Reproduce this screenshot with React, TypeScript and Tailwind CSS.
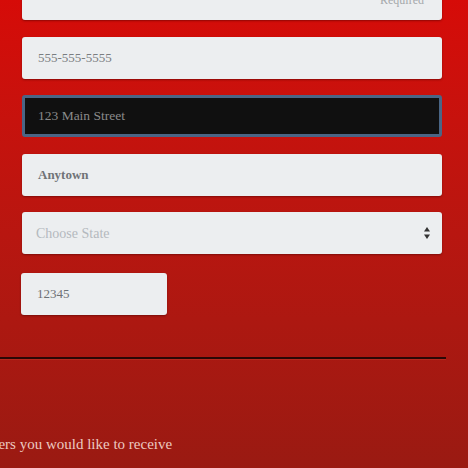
import { ReactNode } from "react";

const fieldClass =
  "flex h-[42px] items-center rounded-[3px] bg-[#eceef0] px-4 text-[13px] shadow-[0_1px_2px_rgba(60,0,0,0.45)]";

function Field({ children, className = "" }: { children: ReactNode; className?: string }) {
  return <div className={`${fieldClass} ${className}`}>{children}</div>;
}

export default function App() {
  return (
    <div
      className="h-[468px] w-[468px] overflow-hidden bg-gradient-to-b from-[#d60b08] via-[#b81610] to-[#9a1a12] text-[#555]"
      style={{ fontFamily: '"Liberation Serif", "DejaVu Serif", serif' }}
    >
      <div className="flex w-[442px] flex-col pl-[22px]">
        {/* campo cortado arriba: solo se ve la etiqueta "Required" */}
        <Field className="-mt-[22px] items-start justify-end pt-[13px]">
          <span className="pr-[2px] text-[12px] text-[#a5a8ab]">Required</span>
        </Field>

        <Field className="mt-[17px] text-[13.5px] text-[#7a7d80]">555-555-5555</Field>

        <div className="mt-[16px] flex h-[42px] items-center rounded-[3px] border-[3px] border-[#4a6585] bg-[#101010] px-[13px] text-[13.5px] text-[#8a8a8a]">
          123 Main Street
        </div>

        <Field className="mt-[17px] text-[13.5px] font-bold text-[#707377]">Anytown</Field>

        <Field className="mt-[16px] justify-between pl-[14px] pr-[12px] text-[14px] text-[#b4b9be]">
          <span>Choose State</span>
          <svg width="6" height="12" viewBox="0 0 6 12" className="text-[#333]">
            <path d="M3 0 L6 4.5 L0 4.5 Z" fill="currentColor" />
            <path d="M0 7.5 L6 7.5 L3 12 Z" fill="currentColor" />
          </svg>
        </Field>

        <Field className="-ml-px mt-[19px] w-[146px] text-[13.5px] text-[#6e7175]">12345</Field>
      </div>

      <div className="mt-[42px] h-[2px] w-[446px] bg-[#2a0806] shadow-[0_1px_0_rgba(255,120,100,0.15)]" />

      <p className="-ml-[114px] mt-[74px] whitespace-nowrap text-[15px] text-[#ecc9c0]">
        Select the newsletters you would like to receive
      </p>
    </div>
  );
}
